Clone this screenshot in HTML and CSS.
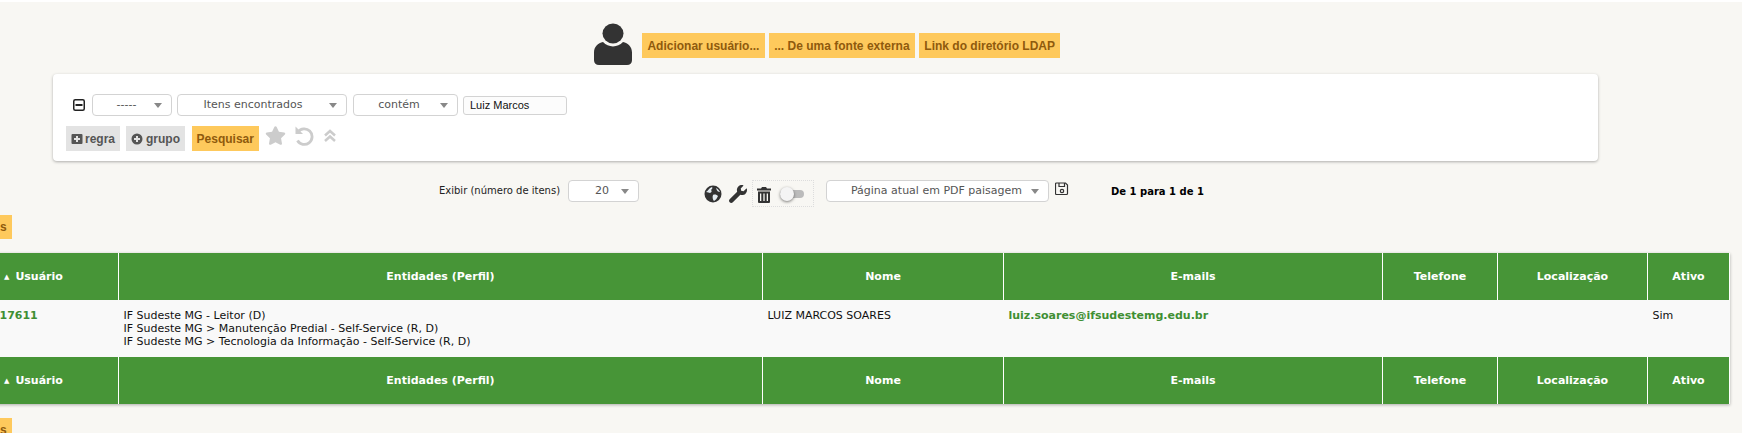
FILE: index.html
```html
<!DOCTYPE html>
<html lang="en">
<head>
  <meta charset="UTF-8" />
  <title>Usuários</title>
  <link rel="stylesheet" href="styles.css">
</head>
<body>
  <div class="top-actions">
    <svg class="user-icon" viewBox="0 0 38 44" preserveAspectRatio="none">
      <circle cx="19" cy="11" r="10.5" fill="#333"/>
      <path d="M9 20c3 3 6 4.500 10 4.500s7-1.500 10-4.500c5 1 9 5 9 11v8c0 3-2 5-5 5H5c-3 0-5-2-5-5v-8c0-6 4-10 9-11z" fill="#333"/>
    </svg>
    <a class="btn">Adicionar usuário...</a>
    <a class="btn">... De uma fonte externa</a>
    <a class="btn">Link do diretório LDAP</a>
  </div>

  <div class="search-panel">
    <div class="criteria-row">
      <svg class="minus-icon" viewBox="0 0 12 12">
        <rect x="0.75" y="0.75" width="10.500" height="10.500" rx="1.500" fill="none" stroke="#222" stroke-width="1.500"/>
        <rect x="2.500" y="5" width="7" height="2" fill="#222"/>
      </svg>
      <div class="sel sel-link">-----</div>
      <div class="sel sel-field">Itens encontrados</div>
      <div class="sel sel-op">contém</div>
      <input class="search-input" type="text" value="Luiz Marcos" />
    </div>
    <div class="button-row">
      <a class="btn btn-grey">
        <svg class="btn-icon" viewBox="0 0 12 12">
          <path fill-rule="evenodd" d="M1.500 1h9A1 1 0 0 1 11.500 2v8a1 1 0 0 1-1 1h-9a1 1 0 0 1-1-1V2a1 1 0 0 1 1-1zM5 3v2H3v2h2v2h2V7h2V5H7V3z" fill="#555"/>
        </svg>regra</a>
      <a class="btn btn-grey">
        <svg class="btn-icon btn-icon-wide" viewBox="0 0 12 12">
          <path fill-rule="evenodd" d="M6 .500a5.500 5.500 0 1 1 0 11 5.500 5.500 0 0 1 0-11zM5 3v2H3v2h2v2h2V7h2V5H7V3z" fill="#555"/>
        </svg>grupo</a>
      <a class="btn btn-search">Pesquisar</a>
      <svg class="star-icon" viewBox="0 0 576 512">
        <path fill="#ccc" d="M259.300 17.800L194 150.200 47.900 171.500c-26.200 3.800-36.700 36.100-17.700 54.600l105.700 103-25 145.500c-4.500 26.300 23.200 46 46.400 33.700L288 439.600l130.700 68.700c23.200 12.200 50.900-7.400 46.400-33.700l-25-145.500 105.700-103c19-18.500 8.500-50.800-17.700-54.600L382 150.200 316.700 17.800c-11.700-23.600-45.600-23.900-57.400 0z"/>
      </svg>
      <svg class="undo-icon" viewBox="0 0 20 20">
        <path d="M1.500 0.500v7.500h7.500z" fill="#ccc"/>
        <path d="M4 6a7.800 7.800 0 1 1-.500 8.500" fill="none" stroke="#ccc" stroke-width="2.800"/>
      </svg>
      <svg class="up-icon" viewBox="0 0 14 14">
        <path d="M2 6.500l5-4.500 5 4.500M2 12l5-4.500 5 4.500" fill="none" stroke="#ccc" stroke-width="2.500"/>
      </svg>
    </div>
  </div>

  <div class="list-controls">
    <span class="show-label">Exibir (número de itens)</span>
    <div class="sel sel-count">20</div>
    <svg class="globe-icon" viewBox="0 0 18 18">
      <circle cx="9" cy="9" r="8.500" fill="#333"/>
      <path d="M2 7c2-1 3-4 6-5 1 1 0 2-1 3 1 1 1 2-1 3-1 0-2-1-4-1zM9 10c2-1 4 0 5 1-1 2-2 4-4 5-1-1-2-4-1-6zM12 3c2 1 3 2 4 4-2 0-3-1-4-4z" fill="#e4ecf2"/>
    </svg>
    <svg class="wrench-icon" viewBox="0 0 512 512">
      <path fill="#333" d="M507.730 109.100c-2.240-9.030-13.540-12.090-20.120-5.510l-74.360 74.360-67.880-11.310-11.310-67.880 74.360-74.360c6.620-6.620 3.430-17.900-5.660-20.160-47.380-11.740-99.550.91-136.580 37.930-39.640 39.640-50.550 97.100-34.050 147.200L18.740 402.760c-24.990 24.990-24.990 65.510 0 90.500 24.990 24.990 65.510 24.990 90.500 0l213.210-213.210c50.120 16.710 107.470 5.680 147.370-34.220 37.070-37.070 49.700-89.320 37.910-136.730z"/>
    </svg>
    <div class="trash-box">
      <svg class="trash-icon" viewBox="0 0 14 16">
        <path fill="#333" d="M5 0h4l1 1.500h4V3.500H0V1.500h4z"/>
        <path fill="#333" fill-rule="evenodd" d="M1 4.500h12V15a1 1 0 0 1-1 1H2a1 1 0 0 1-1-1zM3 6.500V14h1.300V6.500zM6.350 6.500V14h1.300V6.500zM9.700 6.500V14H11V6.500z"/>
      </svg>
      <span class="toggle"><span class="toggle-knob"></span></span>
    </div>
    <div class="sel sel-export">Página atual em PDF paisagem</div>
    <svg class="save-icon" viewBox="0 0 14 14">
      <path d="M1.500 1h9l2 2v8.500a1 1 0 0 1-1 1h-10a1 1 0 0 1-1-1v-9.500a1 1 0 0 1 1-1z" fill="none" stroke="#333" stroke-width="1.200"/>
      <path d="M4 1v3.500h5.500V1" fill="none" stroke="#333" stroke-width="1.200"/>
      <circle cx="7" cy="9" r="1.700" fill="none" stroke="#333" stroke-width="1.200"/>
    </svg>
    <span class="pager">De 1 para 1 de 1</span>
  </div>

  <a class="btn btn-cut">s</a>

  <table class="tab-cadre">
    <colgroup>
      <col class="c-user"><col class="c-ent"><col class="c-name"><col class="c-mail"><col class="c-phone"><col class="c-loc"><col class="c-active">
    </colgroup>
    <thead>
      <tr>
        <th class="th-user"><span class="sort-arrow">▲</span>Usuário</th>
        <th>Entidades (Perfil)</th>
        <th>Nome</th>
        <th>E-mails</th>
        <th>Telefone</th>
        <th>Localização</th>
        <th>Ativo</th>
      </tr>
    </thead>
    <tbody>
      <tr>
        <td><a class="cell-link">17611</a></td>
        <td>IF Sudeste MG - Leitor (D)<br>IF Sudeste MG &gt; Manutenção Predial - Self-Service (R, D)<br>IF Sudeste MG &gt; Tecnologia da Informação - Self-Service (R, D)</td>
        <td>LUIZ MARCOS SOARES</td>
        <td><a class="cell-link">luiz.soares@ifsudestemg.edu.br</a></td>
        <td></td>
        <td></td>
        <td>Sim</td>
      </tr>
    </tbody>
    <tfoot>
      <tr>
        <th class="th-user"><span class="sort-arrow">▲</span>Usuário</th>
        <th>Entidades (Perfil)</th>
        <th>Nome</th>
        <th>E-mails</th>
        <th>Telefone</th>
        <th>Localização</th>
        <th>Ativo</th>
      </tr>
    </tfoot>
  </table>

  <a class="btn btn-cut btn-cut-bottom">s</a>
</body>
</html>
```

FILE: styles.css
```css
html, body {
  height: 433px;
  overflow: hidden;
}
body {
  margin: 0;
  background: #f8f7f3;
  border-top: 2px solid #fff;
  font-family: 'DejaVu Sans', sans-serif;
  font-size: 11px;
  color: #111;
}
.btn {
  display: inline-flex;
  align-items: center;
  height: 25px;
  padding: 0 6px;
  background: #fec95c;
  color: #8f5a0d;
  font-family: 'Liberation Sans', sans-serif;
  font-size: 12px;
  font-weight: bold;
  box-sizing: border-box;
}
.top-actions {
  display: flex;
  align-items: flex-start;
  gap: 4px;
  height: 72px;
  padding: 21px 0 0 594px;
  box-sizing: border-box;
}
.top-actions .btn {
  margin-top: 10px;
  padding: 0 5.4px;
}
.user-icon {
  width: 38px;
  height: 42px;
  margin-right: 6px;
}
.search-panel {
  width: 1545px;
  height: 87px;
  margin-left: 53px;
  padding: 20px 0 0 13px;
  box-sizing: border-box;
  background: #fff;
  border-radius: 4px;
  box-shadow: 0 1px 3px rgba(0,0,0,0.3);
}
.criteria-row {
  display: flex;
  align-items: center;
  height: 22px;
  margin-left: 7px;
}
.minus-icon {
  width: 12px;
  height: 12px;
  margin-right: 7px;
}
.sel {
  position: relative;
  height: 22px;
  line-height: 19px;
  box-sizing: border-box;
  background: #fff;
  border: 1px solid #d3d3d3;
  border-radius: 4px;
  text-align: center;
  color: #555;
  font-size: 11px;
}
.sel::after {
  content: "";
  position: absolute;
  right: 9px;
  top: 8px;
  border-style: solid;
  border-width: 5px 4px 0 4px;
  border-color: #888 transparent transparent transparent;
}
.sel-link {
  width: 80px;
  margin-right: 5px;
  padding-right: 11px;
}
.sel-field {
  width: 170px;
  margin-right: 6px;
  padding-right: 18px;
}
.sel-op {
  width: 105px;
  margin-right: 5px;
  padding-right: 13px;
}
.search-input {
  width: 104px;
  height: 19px;
  padding: 0 6px;
  box-sizing: border-box;
  background: #fcfcfc;
  border: 1px solid #d3d3d3;
  border-radius: 3px;
  font-family: 'Liberation Sans', sans-serif;
  font-size: 11px;
  color: #111;
}
.button-row {
  display: flex;
  align-items: flex-start;
  gap: 6px;
  margin-top: 10px;
}
.btn-grey {
  background: #e3e3e3;
  color: #555;
  padding: 0 5px;
}
.btn-icon {
  width: 12px;
  height: 12px;
  margin-right: 2px;
}
.btn-icon-wide {
  margin-right: 3px;
}
.btn-search {
  padding: 0 5px;
  margin-left: 0.5px;
}
.star-icon {
  width: 21px;
  height: 19px;
}
.undo-icon {
  width: 20px;
  height: 20px;
  margin-left: 2px;
}
.up-icon {
  width: 14px;
  height: 16px;
  margin: 2px 0 0 3px;
}
.list-controls {
  display: flex;
  align-items: flex-start;
  height: 35px;
  margin-top: 19px;
  padding-left: 439px;
  box-sizing: border-box;
}
.show-label {
  width: 129px;
  margin-top: 5px;
  font-size: 10px;
  color: #222;
}
.sel-count {
  width: 71px;
  margin-right: 65px;
  padding-right: 3px;
}
.globe-icon {
  width: 18px;
  height: 18px;
  margin: 5px 7px 0 0;
}
.wrench-icon {
  width: 18px;
  height: 18px;
  margin: 5px 5px 0 0;
}
.trash-box {
  display: flex;
  align-items: flex-start;
  width: 62px;
  height: 27px;
  margin-right: 12px;
  padding: 6px 0 0 4px;
  box-sizing: border-box;
  border: 1px dotted #ddd;
}
.trash-icon {
  width: 14px;
  height: 16px;
}
.toggle {
  position: relative;
  width: 24px;
  height: 8px;
  margin: 3px 0 0 9px;
  background: #bbb;
  border-radius: 4px;
}
.toggle-knob {
  position: absolute;
  left: 0;
  top: -3px;
  width: 14px;
  height: 14px;
  background: #f4f4f4;
  border-radius: 50%;
  box-shadow: 0 1px 3px rgba(0,0,0,0.5);
}
.sel-export {
  width: 223px;
  margin-right: 6px;
  padding-right: 2px;
}
.save-icon {
  width: 14px;
  height: 14px;
  margin-top: 2px;
}
.pager {
  margin: 6px 0 0 42px;
  font-weight: bold;
  font-size: 10px;
  color: #000;
}
.btn-cut {
  display: flex;
  width: 12px;
  height: 24px;
  padding: 0;
}
.btn-cut-bottom {
  margin-top: 14px;
}
.tab-cadre {
  width: 1735px;
  margin: 14px 0 0 -6px;
  table-layout: fixed;
  border-collapse: collapse;
  box-shadow: 0 1px 3px rgba(0,0,0,0.3);
}
.c-user { width: 124px; }
.c-ent { width: 644px; }
.c-name { width: 241px; }
.c-mail { width: 379px; }
.c-phone { width: 115px; }
.c-loc { width: 150px; }
.c-active { width: 82px; }
.tab-cadre th {
  height: 47px;
  padding: 0;
  background: #479537;
  border-left: 1px solid #fff;
  border-right: 1px solid #fff;
  color: #fff;
  font-size: 11px;
  font-weight: bold;
  text-align: center;
}
.tab-cadre .th-user {
  padding-left: 9px;
  text-align: left;
}
.tab-cadre td {
  height: 57px;
  padding: 9px 5px 0;
  box-sizing: border-box;
  background: #f9f9f9;
  vertical-align: top;
  line-height: 13px;
  color: #111;
}
.sort-arrow {
  margin-right: 6px;
  font-size: 7px;
  vertical-align: 1px;
}
.cell-link {
  color: #3f8f33;
  font-weight: bold;
}
```
